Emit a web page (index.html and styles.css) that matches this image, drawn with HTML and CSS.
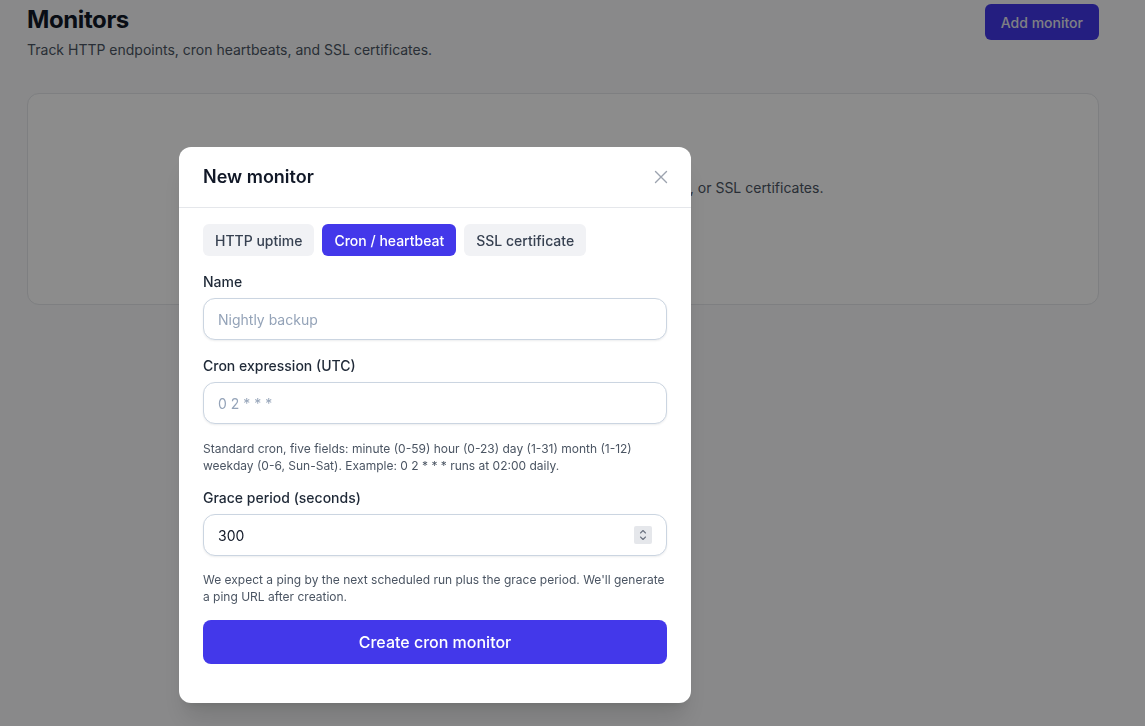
FILE: index.html
```html
<!DOCTYPE html>
<html lang="en">
<head>
<meta charset="utf-8">
<title>Monitors</title>
<link rel="stylesheet" href="styles.css">
</head>
<body>
<main class="page">
  <header class="page-head">
    <div>
      <h1 class="page-title">Monitors</h1>
      <p class="page-sub">Track HTTP endpoints, cron heartbeats, and SSL certificates.</p>
    </div>
    <button class="btn-add">Add monitor</button>
  </header>

  <section class="empty-card">
    <h2 class="empty-title">No monitors yet</h2>
    <p class="empty-text">Add one to start tracking HTTP endpoints, cron heartbeats, or SSL certificates.</p>
    <button class="btn-empty">Add monitor</button>
  </section>
</main>

<div class="backdrop"></div>

<div class="modal" role="dialog" aria-labelledby="modal-title">
  <div class="modal-head">
    <h2 id="modal-title" class="modal-title">New monitor</h2>
    <button class="modal-close" aria-label="Close">
      <svg width="14" height="14" viewBox="0 0 14 14" fill="none" stroke="currentColor" stroke-width="1.4" stroke-linecap="round"><path d="M1.5 1.5l11 11M12.5 1.5l-11 11"/></svg>
    </button>
  </div>
  <div class="modal-body">
    <div class="tabs">
      <button class="tab">HTTP uptime</button>
      <button class="tab tab-active">Cron / heartbeat</button>
      <button class="tab">SSL certificate</button>
    </div>

    <label class="label label-first" for="name">Name</label>
    <input class="field" id="name" type="text" placeholder="Nightly backup">

    <label class="label" for="cron">Cron expression (UTC)</label>
    <input class="field" id="cron" type="text" placeholder="0 2 * * *">
    <p class="help">Standard cron, five fields: minute (0-59) hour (0-23) day (1-31) month (1-12) weekday (0-6, Sun-Sat). Example: 0 2 * * * runs at 02:00 daily.</p>

    <label class="label" for="grace">Grace period (seconds)</label>
    <div class="num-wrap">
      <input class="field field-num" id="grace" type="text" value="300">
      <span class="spin" aria-hidden="true">
        <svg width="8" height="12" viewBox="0 0 8 12" fill="none" stroke="#6b7280" stroke-width="1.1" stroke-linecap="round" stroke-linejoin="round"><path d="M1.5 4L4 1.5 6.5 4M1.5 8L4 10.5 6.5 8"/></svg>
      </span>
    </div>
    <p class="help help-last">We expect a ping by the next scheduled run plus the grace period. We'll generate a ping URL after creation.</p>

    <button class="btn-create">Create cron monitor</button>
  </div>
</div>
</body>
</html>
```

FILE: styles.css
```css
* { box-sizing: border-box; }

html, body {
  margin: 0;
  height: 100%;
}

body {
  background: #f9fafb;
  font-family: Inter, "Noto Sans", "Liberation Sans", sans-serif;
  color: #111827;
  overflow: hidden;
}

button, input {
  font-family: inherit;
}

/* ---- page ---- */
.page {
  width: 1072px;
  margin-left: 27px;
  padding-top: 4px;
}

.page-head {
  display: flex;
  justify-content: space-between;
  align-items: flex-start;
}

.page-title {
  margin: 0;
  font-size: 24px;
  line-height: 32px;
  font-weight: 700;
  letter-spacing: -0.4px;
  color: #111827;
}

.page-sub {
  margin: 4px 0 0;
  font-size: 14px;
  line-height: 20px;
  color: #4b5563;
}

.btn-add {
  height: 36px;
  padding: 0 16px;
  border: 0;
  border-radius: 6px;
  background: #4338ea;
  color: #e8e8f0;
  font-size: 14px;
  font-weight: 500;
}

.empty-card {
  margin-top: 33px;
  height: 212px;
  background: #fff;
  border: 1px solid #e5e7eb;
  border-radius: 12px;
  display: flex;
  flex-direction: column;
  align-items: center;
  padding-top: 50px;
}

.empty-title {
  margin: 0;
  font-size: 16px;
  line-height: 24px;
  font-weight: 600;
}

.empty-text {
  margin: 10px 0 0;
  font-size: 14px;
  line-height: 20px;
  color: #4b5563;
}

.btn-empty {
  margin-top: 18px;
  height: 36px;
  padding: 0 16px;
  border: 0;
  border-radius: 6px;
  background: #4338ea;
  color: #fff;
  font-size: 14px;
  font-weight: 500;
}

/* ---- dialog ---- */
.backdrop {
  position: fixed;
  inset: 0;
  background: rgba(0, 0, 0, 0.45);
}

.modal {
  position: fixed;
  left: 179px;
  top: 147px;
  width: 512px;
  height: 556px;
  background: #fff;
  border-radius: 12px;
  box-shadow: 0 20px 25px -5px rgba(0, 0, 0, 0.12), 0 8px 10px -6px rgba(0, 0, 0, 0.1);
  display: flex;
  flex-direction: column;
}

.modal-head {
  display: flex;
  align-items: center;
  justify-content: space-between;
  padding: 16px 24px;
  border-bottom: 1px solid #e5e7eb;
}

.modal-title {
  margin: 0;
  font-size: 18px;
  line-height: 28px;
  font-weight: 600;
  color: #111827;
}

.modal-close {
  width: 20px;
  height: 20px;
  margin-right: -4px;
  padding: 0;
  border: 0;
  background: none;
  color: #9ca3af;
  display: flex;
  align-items: center;
  justify-content: center;
}

.modal-body {
  padding: 16px 24px 0;
  display: flex;
  flex-direction: column;
}

.tabs {
  display: flex;
  gap: 8px;
}

.tab {
  height: 32px;
  padding: 0 12px;
  border: 0;
  border-radius: 6px;
  background: #f1f2f5;
  color: #374151;
  font-size: 14px;
  font-weight: 500;
}

.tab-active {
  background: #4338ea;
  color: #fff;
}

.label {
  display: block;
  margin-top: 16px;
  font-size: 14px;
  line-height: 20px;
  font-weight: 500;
  color: #1f2937;
}

.field {
  margin-top: 6px;
  width: 100%;
  height: 42px;
  padding: 0 14px;
  border: 1px solid #cbd5e1;
  border-radius: 12px;
  box-shadow: 0 1px 2px rgba(15, 23, 42, 0.08);
  font-size: 14px;
  color: #111827;
  background: #fff;
  outline: none;
}

.field::placeholder {
  color: #94a3b8;
}

.num-wrap {
  position: relative;
  margin-top: 6px;
}

.num-wrap .field {
  margin-top: 0;
}

.spin {
  position: absolute;
  right: 15px;
  top: 12px;
  width: 18px;
  height: 18px;
  background: #e5e7eb;
  border-radius: 2px;
  display: flex;
  align-items: center;
  justify-content: center;
}

.help {
  margin: 16px 0 0;
  font-size: 12px;
  line-height: 17px;
  color: #4b5563;
}

.help-last {
  margin-top: 15px;
}

.help + .label {
  margin-top: 14px;
}

.btn-create {
  margin-top: 15px;
  height: 44px;
  width: 100%;
  border: 0;
  border-radius: 8px;
  background: #4338ea;
  color: #fff;
  font-size: 16px;
  font-weight: 500;
}
```
